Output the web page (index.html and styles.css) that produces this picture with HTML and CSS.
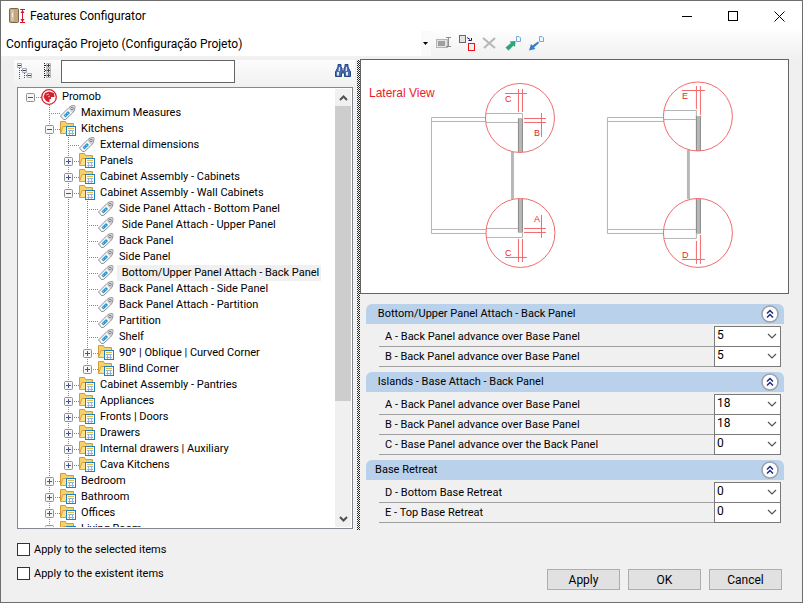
FILE: index.html
```html
<!DOCTYPE html>
<html lang="en">
<head>
    <meta charset="UTF-8">
    <meta name="viewport" content="width=device-width, initial-scale=1.0">
    <title>Features Configurator</title>
    <link rel="stylesheet" href="styles.css">
</head>
<body>
    <svg class="sprite" aria-hidden="true">
        <symbol id="tag" viewBox="0 0 16 16">
            <path d="M0.500 11L9 2.500L11 1L14.500 0.500L15 1.500L14.500 5.500L12.500 8L5.500 14.500L3.500 14.500Z" fill="#f6f8fa" stroke="#8a8d92"/>
            <path d="M8.500 4L11.500 1.500L14 1.500L14 5.500L12 7.500Z" fill="#cfd2d5"/>
            <path d="M3.500 10.500L8 6L10 8L5.500 12.500Z" fill="#2a93d5"/>
            <path d="M4.500 9.500L6.500 11.500M6.500 7.500L8.500 9.500" stroke="#8ccbf0"/>
            <circle cx="12" cy="3.500" r="1.200" fill="#fff" stroke="#777"/>
        </symbol>
        <symbol id="folder" viewBox="0 0 16 16">
            <path d="M0.500 12.500V0.500H5.500L6.500 2.500H13.500V6" fill="#f7cf6b" stroke="#d49a35"/>
            <path d="M0.500 12.500L3 5.500H13.500V12.500Z" fill="#fde08a" stroke="#d9a23e"/>
            <rect x="6.500" y="5.500" width="9" height="9" fill="#fff" stroke="#1c83bd"/>
            <path d="M8 7.500H14" stroke="#f3b73c"/>
            <path d="M8 9.500H14M8 12.500H14M9.500 9V14M12.500 9V14" stroke="#8db8dc"/>
        </symbol>
        <symbol id="minus" viewBox="0 0 9 9">
            <rect x="0.500" y="0.500" width="8" height="8" rx="1" fill="#f6f6f6" stroke="#919191"/>
            <path d="M2 4.500H7" stroke="#3b55a5"/>
        </symbol>
        <symbol id="plus" viewBox="0 0 9 9">
            <rect x="0.500" y="0.500" width="8" height="8" rx="1" fill="#f6f6f6" stroke="#919191"/>
            <path d="M2 4.500H7M4.500 2V7" stroke="#3b55a5"/>
        </symbol>
        <symbol id="chevron" viewBox="0 0 10 6">
            <path d="M1 1L5 5L9 1" fill="none" stroke="#555" stroke-width="1.200"/>
        </symbol>
        <symbol id="collapse" viewBox="0 0 18 18">
            <circle cx="9" cy="9" r="8" fill="#fdfdfe" stroke="#9aa0aa" stroke-width="1.500"/>
            <path d="M6 8.500L9 5.500L12 8.500M6 12.500L9 9.500L12 12.500" fill="none" stroke="#1e2f7a" stroke-width="1.500"/>
        </symbol>
        <symbol id="page" viewBox="0 0 5 6">
            <path d="M0.500 0.500H3L4.500 2V5.500H0.500Z" fill="#eef5fc" stroke="#7ba6d6"/>
        </symbol>
    </svg>

    <div class="window">
        <header class="titlebar">
            <svg class="app-icon" viewBox="0 0 17 16">
                <rect x="0.500" y="0.500" width="9" height="14" rx="1" fill="#c2a583" stroke="#7d6548"/>
                <rect x="2" y="2" width="3" height="11" fill="#d8c1a4"/>
                <path d="M3.500 5V9" stroke="#eee"/>
                <path d="M11 1.500H16M11 14.500H16M13.500 2V14" stroke="#d9112c"/>
                <path d="M11.500 5L13.500 2L15.500 5ZM11.500 11L13.500 14L15.500 11Z" fill="#d9112c"/>
            </svg>
            <h1 class="title">Features Configurator</h1>
            <button class="win-btn" aria-label="Minimize"><svg viewBox="0 0 11 11"><path d="M0 5.500H10" stroke="#000"/></svg></button>
            <button class="win-btn" aria-label="Maximize"><svg viewBox="0 0 11 11"><rect x="0.500" y="0.500" width="9" height="9" fill="none" stroke="#000"/></svg></button>
            <button class="win-btn" aria-label="Close"><svg viewBox="0 0 11 11"><path d="M0.500 0.500L10.500 10.500M10.500 0.500L0.500 10.500" stroke="#000"/></svg></button>
        </header>

        <div class="toolbar">
            <div class="config">
                <select class="config-select" aria-label="Configuration">
                    <option>Configuração Projeto (Configuração Projeto)</option>
                </select>
                <svg class="config-arrow" viewBox="0 0 5 3"><path d="M0 0H5L2.500 3Z"/></svg>
            </div>
            <button class="tool" aria-label="Rename">
                <svg viewBox="0 0 16 16"><rect x="0.500" y="4.500" width="11" height="8" fill="#e2e2e2" stroke="#b5b5b5"/><rect x="2" y="6" width="7" height="5" fill="#9f9f9f"/><path d="M10 2.500H15M10 11.500H15M12.500 3V11" stroke="#8e8e8e"/></svg>
            </button>
            <button class="tool" aria-label="Replace">
                <svg viewBox="0 0 16 16"><rect x="0.500" y="0.500" width="6" height="7" fill="#e4e4e4" stroke="#6f6468"/><path d="M8 2.500L11 4.500M9.500 5.500H12.500V3" fill="none" stroke="#14146e"/><rect x="9.500" y="8.500" width="6" height="7" fill="#eef0f2" stroke="#e11" /></svg>
            </button>
            <button class="tool" aria-label="Delete">
                <svg viewBox="0 0 16 16"><path d="M1 3L13 13M13 3L2 13" stroke="#b8b8b8" stroke-width="2.200"/></svg>
            </button>
            <button class="tool" aria-label="Export">
                <svg viewBox="0 0 16 16"><path d="M0.500 12.500L6 8L4.500 6.500L10.500 6L10 12L8.500 10.500L3.500 15.500Z" fill="#2ea27a"/><use href="#page" x="11" y="1" width="5" height="6"/></svg>
            </button>
            <button class="tool" aria-label="Import">
                <svg viewBox="0 0 16 16"><path d="M10 6.500L4.500 10.500L3 9L1 15.500L7.500 14L6 12.500L11 8Z" fill="#3b7cc9"/><use href="#page" x="11" y="1" width="5" height="6"/></svg>
            </button>
        </div>

        <main class="content">
            <section class="left">
                <div class="search">
                    <button class="tool" aria-label="Expand tree">
                        <svg viewBox="0 0 16 16"><path d="M2.500 5V16M7.500 10V16M5 7.500H3M10 12.500H8" stroke="#555" stroke-dasharray="1 1"/><path d="M0.500 0.500H4.500V4.500H0.500ZM5.500 5.500H9.500V9.500H5.500ZM10.500 10.500H14.500V14.500H10.500Z" fill="#f4f6fa" stroke="#a3a9b5"/><path d="M1 2.500H4M6 7.500H9M11 12.500H14" stroke="#333f66"/></svg>
                    </button>
                    <button class="tool" aria-label="Collapse tree">
                        <svg viewBox="0 0 16 16"><path d="M5.500 0V16M6 2.500H8M6 7.500H8M6 12.500H8" stroke="#222" stroke-dasharray="1 1"/><path d="M7.500 0.500H11.500V4.500H7.500ZM7.500 5.500H11.500V9.500H7.500ZM7.500 10.500H11.500V14.500H7.500Z" fill="#eee" stroke="#b5b5b5"/><path d="M8 2.500H11M9.500 1V4M8 7.500H11M9.500 6V9M8 12.500H11M9.500 11V14" stroke="#444"/></svg>
                    </button>
                    <input class="search-input" type="text" aria-label="Search">
                    <button class="tool find" aria-label="Find">
                        <svg viewBox="0 0 16 16"><path d="M3 1.500H6V4L7 5V8H9V5L10 4V1.500H13V4L15.500 9V13.500H9.500V10H6.500V13.500H0.500V9L3 4Z" fill="#4a6eb0" stroke="#264686"/><path d="M2 9H4V12.500H2ZM11 9H13V12.500H11ZM4 4H5V8H3.500ZM11 4H12V8H10.500Z" fill="#dbe7f7"/></svg>
                    </button>
                </div>

                <div class="tree-box">
                    <ul class="tree">
                        <li>
                            <div class="node"><button class="toggle" aria-label="Collapse"><svg><use href="#minus"/></svg></button><svg class="icon" viewBox="0 0 16 16"><circle cx="8" cy="8" r="7.300" fill="#fff" stroke="#d3202f" stroke-width="1.300"/><path d="M4 4L8 2.500L13 4L13.500 8H10V10H8.500V13.500L5 12L2.500 8Z" fill="#d3202f"/><path d="M5 6L8 5M7 8L9 7" stroke="#f3a2a8"/></svg><span class="label">Promob</span></div>
                            <ul>
                                <li><div class="node leaf"><svg class="icon"><use href="#tag"/></svg><span class="label">Maximum Measures</span></div></li>
                                <li>
                                    <div class="node"><button class="toggle" aria-label="Collapse"><svg><use href="#minus"/></svg></button><svg class="icon"><use href="#folder"/></svg><span class="label">Kitchens</span></div>
                                    <ul>
                                        <li><div class="node leaf"><svg class="icon"><use href="#tag"/></svg><span class="label">External dimensions</span></div></li>
                                        <li><div class="node"><button class="toggle" aria-label="Expand"><svg><use href="#plus"/></svg></button><svg class="icon"><use href="#folder"/></svg><span class="label">Panels</span></div></li>
                                        <li><div class="node"><button class="toggle" aria-label="Expand"><svg><use href="#plus"/></svg></button><svg class="icon"><use href="#folder"/></svg><span class="label">Cabinet Assembly - Cabinets</span></div></li>
                                        <li>
                                            <div class="node"><button class="toggle" aria-label="Collapse"><svg><use href="#minus"/></svg></button><svg class="icon"><use href="#folder"/></svg><span class="label">Cabinet Assembly - Wall Cabinets</span></div>
                                            <ul>
                                                <li><div class="node leaf"><svg class="icon"><use href="#tag"/></svg><span class="label">Side Panel Attach - Bottom Panel</span></div></li>
                                                <li><div class="node leaf"><svg class="icon"><use href="#tag"/></svg><span class="label">&nbsp;Side Panel Attach - Upper Panel</span></div></li>
                                                <li><div class="node leaf"><svg class="icon"><use href="#tag"/></svg><span class="label">Back Panel</span></div></li>
                                                <li><div class="node leaf"><svg class="icon"><use href="#tag"/></svg><span class="label">Side Panel</span></div></li>
                                                <li><div class="node leaf"><svg class="icon"><use href="#tag"/></svg><span class="label selected">&nbsp;Bottom/Upper Panel Attach - Back Panel</span></div></li>
                                                <li><div class="node leaf"><svg class="icon"><use href="#tag"/></svg><span class="label">Back Panel Attach - Side Panel</span></div></li>
                                                <li><div class="node leaf"><svg class="icon"><use href="#tag"/></svg><span class="label">Back Panel Attach - Partition</span></div></li>
                                                <li><div class="node leaf"><svg class="icon"><use href="#tag"/></svg><span class="label">Partition</span></div></li>
                                                <li><div class="node leaf"><svg class="icon"><use href="#tag"/></svg><span class="label">Shelf</span></div></li>
                                                <li><div class="node"><button class="toggle" aria-label="Expand"><svg><use href="#plus"/></svg></button><svg class="icon"><use href="#folder"/></svg><span class="label">90º | Oblique | Curved Corner</span></div></li>
                                                <li><div class="node"><button class="toggle" aria-label="Expand"><svg><use href="#plus"/></svg></button><svg class="icon"><use href="#folder"/></svg><span class="label">Blind Corner</span></div></li>
                                            </ul>
                                        </li>
                                        <li><div class="node"><button class="toggle" aria-label="Expand"><svg><use href="#plus"/></svg></button><svg class="icon"><use href="#folder"/></svg><span class="label">Cabinet Assembly - Pantries</span></div></li>
                                        <li><div class="node"><button class="toggle" aria-label="Expand"><svg><use href="#plus"/></svg></button><svg class="icon"><use href="#folder"/></svg><span class="label">Appliances</span></div></li>
                                        <li><div class="node"><button class="toggle" aria-label="Expand"><svg><use href="#plus"/></svg></button><svg class="icon"><use href="#folder"/></svg><span class="label">Fronts | Doors</span></div></li>
                                        <li><div class="node"><button class="toggle" aria-label="Expand"><svg><use href="#plus"/></svg></button><svg class="icon"><use href="#folder"/></svg><span class="label">Drawers</span></div></li>
                                        <li><div class="node"><button class="toggle" aria-label="Expand"><svg><use href="#plus"/></svg></button><svg class="icon"><use href="#folder"/></svg><span class="label">Internal drawers | Auxiliary</span></div></li>
                                        <li><div class="node"><button class="toggle" aria-label="Expand"><svg><use href="#plus"/></svg></button><svg class="icon"><use href="#folder"/></svg><span class="label">Cava Kitchens</span></div></li>
                                    </ul>
                                </li>
                                <li><div class="node"><button class="toggle" aria-label="Expand"><svg><use href="#plus"/></svg></button><svg class="icon"><use href="#folder"/></svg><span class="label">Bedroom</span></div></li>
                                <li><div class="node"><button class="toggle" aria-label="Expand"><svg><use href="#plus"/></svg></button><svg class="icon"><use href="#folder"/></svg><span class="label">Bathroom</span></div></li>
                                <li><div class="node"><button class="toggle" aria-label="Expand"><svg><use href="#plus"/></svg></button><svg class="icon"><use href="#folder"/></svg><span class="label">Offices</span></div></li>
                                <li><div class="node"><button class="toggle" aria-label="Expand"><svg><use href="#plus"/></svg></button><svg class="icon"><use href="#folder"/></svg><span class="label">Living Room</span></div></li>
                            </ul>
                        </li>
                    </ul>
                    <div class="scrollbar">
                        <button class="scroll-btn" aria-label="Scroll up"><svg viewBox="0 0 9 6"><path d="M1 5L4.500 1.500L8 5" fill="none" stroke="#505050" stroke-width="2"/></svg></button>
                        <div class="track"><div class="thumb"></div></div>
                        <button class="scroll-btn" aria-label="Scroll down"><svg viewBox="0 0 9 6"><path d="M1 1L4.500 4.500L8 1" fill="none" stroke="#505050" stroke-width="2"/></svg></button>
                    </div>
                </div>
            </section>

            <div class="splitter"></div>

            <section class="right">
                <div class="preview">
                    <svg viewBox="361 61 427 233" role="img" aria-label="Lateral View">
                        <text x="369" y="98" class="view-title">Lateral View</text>
                        <!-- left cabinet -->
                        <g class="body">
                            <path d="M486 118.500H431.500V234.500H486M432 122.500H486M432 230.500H486"/>
                            <path d="M486 114.500H522.500V119M486 123.500H518M486 229.500H518M486 238.500H522.500V233"/>
                        </g>
                        <g class="panel">
                            <rect x="511" y="153" width="3" height="47"/>
                            <rect x="518" y="119" width="5" height="34"/>
                            <rect x="518" y="200" width="5" height="34"/>
                        </g>
                        <path class="edge" d="M518.500 120V153M522.500 120V153M518.500 200V233M522.500 200V233"/>
                        <g class="mark">
                            <circle cx="520" cy="119" r="34.500"/>
                            <circle cx="520.500" cy="234" r="34.500"/>
                            <path d="M505 94.500H527M518.500 90V113M522.500 90V113"/>
                            <path d="M524 119.500H546M524 123.500H546M541.500 114V138"/>
                            <path d="M524 229.500H546M524 233.500H546M541.500 216V239"/>
                            <path d="M505 258.500H527M518.500 240V263M522.500 240V263"/>
                        </g>
                        <g class="letter">
                            <text x="505" y="103">C</text>
                            <text x="534" y="137">B</text>
                            <text x="534" y="223">A</text>
                            <text x="505" y="257">C</text>
                        </g>
                        <!-- right cabinet -->
                        <g class="body">
                            <path d="M664 118.500H607.500V234.500H664M608 122.500H664M608 230.500H664"/>
                            <path d="M664 111.500H696.500V119M664 120.500H696M664 230.500H696M664 239.500H696.500V234"/>
                        </g>
                        <g class="panel">
                            <rect x="687" y="151" width="3" height="49"/>
                            <rect x="696" y="117" width="5" height="35"/>
                            <rect x="696" y="200" width="5" height="35"/>
                        </g>
                        <path class="edge" d="M696.500 117V152M700.500 117V152M696.500 200V234M700.500 200V234"/>
                        <g class="mark">
                            <circle cx="698" cy="117.500" r="34.500"/>
                            <circle cx="698" cy="234" r="34.500"/>
                            <path d="M682 91.500H705M696.500 87V110M700.500 87V116"/>
                            <path d="M682 260.500H705M696.500 242V265M700.500 236V265"/>
                        </g>
                        <g class="letter">
                            <text x="682" y="100">E</text>
                            <text x="682" y="259">D</text>
                        </g>
                    </svg>
                </div>

                <div class="groups">
                    <section class="group">
                        <h2 class="group-header"><span>&nbsp;Bottom/Upper Panel Attach - Back Panel</span><button class="collapse" aria-label="Collapse group"><svg><use href="#collapse"/></svg></button></h2>
                        <div class="row"><label for="bu-a">A - Back Panel advance over Base Panel</label><div class="combo"><select id="bu-a"><option>5</option></select><svg><use href="#chevron"/></svg></div></div>
                        <div class="row"><label for="bu-b">B - Back Panel advance over Base Panel</label><div class="combo"><select id="bu-b"><option>5</option></select><svg><use href="#chevron"/></svg></div></div>
                    </section>
                    <section class="group">
                        <h2 class="group-header"><span>&nbsp;Islands - Base Attach - Back Panel</span><button class="collapse" aria-label="Collapse group"><svg><use href="#collapse"/></svg></button></h2>
                        <div class="row"><label for="is-a">A - Back Panel advance over Base Panel</label><div class="combo"><select id="is-a"><option>18</option></select><svg><use href="#chevron"/></svg></div></div>
                        <div class="row"><label for="is-b">B - Back Panel advance over Base Panel</label><div class="combo"><select id="is-b"><option>18</option></select><svg><use href="#chevron"/></svg></div></div>
                        <div class="row"><label for="is-c">C - Base Panel advance over the Back Panel</label><div class="combo"><select id="is-c"><option>0</option></select><svg><use href="#chevron"/></svg></div></div>
                    </section>
                    <section class="group">
                        <h2 class="group-header"><span>Base Retreat</span><button class="collapse" aria-label="Collapse group"><svg><use href="#collapse"/></svg></button></h2>
                        <div class="row"><label for="br-d">D - Bottom Base Retreat</label><div class="combo"><select id="br-d"><option>0</option></select><svg><use href="#chevron"/></svg></div></div>
                        <div class="row"><label for="br-e">E - Top Base Retreat</label><div class="combo"><select id="br-e"><option>0</option></select><svg><use href="#chevron"/></svg></div></div>
                    </section>
                </div>
            </section>
        </main>

        <footer class="footer">
            <div class="checks">
                <label class="check"><input type="checkbox">Apply to the selected items</label>
                <label class="check"><input type="checkbox">Apply to the existent items</label>
            </div>
            <div class="actions">
                <button class="btn">Apply</button>
                <button class="btn">OK</button>
                <button class="btn">Cancel</button>
            </div>
        </footer>
    </div>
</body>
</html>
```

FILE: styles.css
```css
* {
    box-sizing: border-box;
}
body {
    margin: 0;
    padding: 0 7px 10px 0;
    background: #fff;
    color: #000;
    font-family: Roboto, "Liberation Sans", sans-serif;
    font-size: 11px;
}
button,
input,
select {
    margin: 0;
    padding: 0;
    border: none;
    background: none;
    color: inherit;
    font: inherit;
}
ul {
    margin: 0;
    padding: 0;
    list-style: none;
}
svg {
    display: block;
}
.sprite {
    display: none;
}
.window {
    display: flex;
    flex-direction: column;
    height: calc(100vh - 10px);
    min-height: 560px;
    border: 1px solid #6e6e6e;
    background: #f0f0f0;
}

/* title bar */
.titlebar {
    display: flex;
    align-items: center;
    height: 30px;
    padding-left: 8px;
    background: #fff;
}
.app-icon {
    width: 17px;
    height: 16px;
    margin-right: 4px;
}
.title {
    flex: 1;
    margin: 0;
    font-size: 12px;
    font-weight: normal;
}
.win-btn {
    display: flex;
    align-items: center;
    justify-content: center;
    width: 46px;
    height: 30px;
}
.win-btn svg {
    width: 11px;
    height: 11px;
}

/* toolbar */
.toolbar {
    display: flex;
    align-items: flex-start;
    height: 28px;
    background: linear-gradient(#fdfdfd, #f0f0f0);
}
.config {
    display: grid;
    align-items: center;
    flex: 0 1 430px;
    height: 25px;
    margin-right: 5px;
    background: linear-gradient(to left, #fafafa 10px, #fff 10px);
}
.config-select {
    grid-area: 1 / 1;
    height: 25px;
    padding-left: 5px;
    font-size: 12px;
    appearance: none;
}
.config-arrow {
    grid-area: 1 / 1;
    justify-self: end;
    width: 5px;
    height: 3px;
    margin-right: 3px;
    pointer-events: none;
}
.tool {
    width: 16px;
    height: 16px;
    margin: 4px 7px 0 0;
}
.tool svg {
    width: 16px;
    height: 16px;
}

/* panes */
.content {
    display: grid;
    grid-template-columns: minmax(0, 4fr) 3px minmax(0, 5fr);
    flex: 1;
    min-height: 0;
    padding: 0 13px;
}
.left {
    display: flex;
    flex-direction: column;
    min-height: 0;
    padding-right: 2px;
}
.search {
    display: flex;
    height: 24px;
    margin: 1px 0 3px;
    padding-left: 3px;
    background: linear-gradient(#fcfcfc, #f2f2f2);
}
.search-input {
    flex: 0 1 174px;
    min-width: 0;
    height: 23px;
    padding: 0 4px;
    border: 1px solid #646464;
    background: #fff;
}
.search .tool {
    margin: 3px 6px 0 0;
}
.search .find {
    margin: 3px 4px 0 auto;
}
.splitter {
    margin-top: 1px;
    background: conic-gradient(#222 25%, #fff 0 50%, #222 0 75%, #fff 0) 0 0 / 2px 2px;
}

/* tree */
.tree-box {
    display: flex;
    flex: 1;
    min-height: 0;
    margin: 0 2px 1px 3px;
    padding: 1px;
    border: 1px solid #828790;
    background: #fff;
}
.tree {
    flex: 1;
    min-width: 0;
    overflow: hidden;
    padding-left: 7px;
}
.tree ul {
    padding-left: 19px;
    background: repeating-linear-gradient(#888 0 1px, transparent 1px 2px) 23px 0 / 1px calc(100% - 8px) no-repeat;
}
.node {
    display: flex;
    align-items: center;
    height: 16px;
    background: repeating-linear-gradient(to right, #888 0 1px, transparent 1px 2px) 4px 8px / 11px 1px no-repeat;
}
.toggle,
.toggle svg {
    display: block;
    width: 9px;
    height: 9px;
}
.toggle {
    margin-right: 6px;
}
.leaf {
    padding-left: 15px;
}
.icon {
    flex: none;
    width: 16px;
    height: 16px;
}
.label {
    margin-left: 3px;
    padding: 0 2px;
    line-height: 16px;
    white-space: nowrap;
}
.selected {
    background: #f0f0f0;
}
.scrollbar {
    display: flex;
    flex-direction: column;
    width: 16px;
    background: #f0f0f0;
}
.scroll-btn {
    display: flex;
    align-items: center;
    justify-content: center;
    height: 17px;
}
.scroll-btn svg {
    width: 9px;
    height: 6px;
}
.track {
    flex: 1;
}
.thumb {
    height: 73%;
    background: #cdcdcd;
}

/* preview and properties */
.right {
    display: flex;
    flex-direction: column;
    min-width: 0;
}
.preview {
    border: 1px solid #646464;
    background: #fff;
}
.preview svg {
    width: 100%;
    height: auto;
}
.view-title {
    fill: #ec1c24;
    font: 12px "Liberation Sans", sans-serif;
}
.body {
    fill: none;
    stroke: #b4b4b4;
}
.panel {
    fill: #b8b8b8;
}
.edge {
    stroke: #8c8c8c;
}
.mark {
    fill: none;
    stroke: #f0696b;
}
.letter {
    fill: #ec1c24;
    font: 9px "Liberation Sans", sans-serif;
}
.groups {
    padding: 10px 5px 0 6px;
}
.group {
    margin-bottom: 5px;
}
.group-header {
    display: flex;
    align-items: center;
    justify-content: space-between;
    height: 20px;
    margin: 0 0 3px;
    padding: 0 5px 0 9px;
    border-radius: 6px 6px 0 0;
    background: #b9d1ea;
    font-size: 11px;
    font-weight: normal;
}
.collapse,
.collapse svg {
    display: block;
    width: 18px;
    height: 18px;
}
.row {
    display: flex;
    align-items: center;
    justify-content: space-between;
    height: 20px;
    margin: 0 3px 0 13px;
    padding-left: 6px;
    border-bottom: 1px solid #a0a0a0;
}
.combo {
    display: grid;
    align-items: center;
    width: 67px;
}
.combo select {
    grid-area: 1 / 1;
    height: 21px;
    padding: 0 0 2px 2px;
    border: 1px solid #7a7a7a;
    background: #fff;
    font-size: 12px;
    appearance: none;
}
.combo svg {
    grid-area: 1 / 1;
    justify-self: end;
    width: 10px;
    height: 6px;
    margin-right: 4px;
    pointer-events: none;
}

/* footer */
.footer {
    display: flex;
    justify-content: space-between;
    align-items: flex-end;
    padding: 11px 20px 12px 16px;
}
.checks {
    display: flex;
    flex-direction: column;
    gap: 8px;
    padding-bottom: 9px;
}
.check {
    display: flex;
    align-items: center;
    gap: 4px;
    height: 16px;
}
.check input {
    width: 13px;
    height: 13px;
    border: 1px solid #333;
    background: #fff;
    appearance: none;
}
.check input:checked {
    background: #333;
}
.actions {
    display: flex;
    gap: 8px;
}
.btn {
    width: 73px;
    height: 21px;
    border: 1px solid #adadad;
    background: #e1e1e1;
    font-size: 12px;
}
```
